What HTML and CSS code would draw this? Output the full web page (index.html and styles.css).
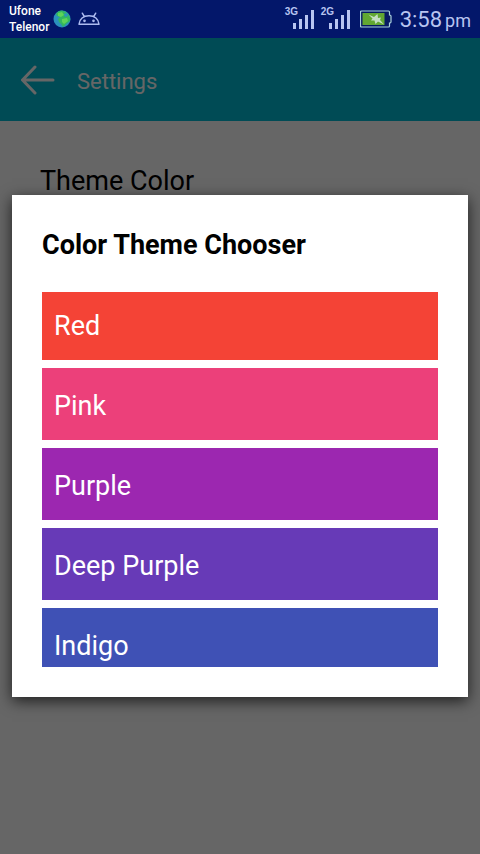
FILE: index.html
```html
<!DOCTYPE html>
<html lang="en">
<head>
<meta charset="utf-8">
<meta name="viewport" content="width=device-width, initial-scale=1">
<title>Settings</title>
<link rel="stylesheet" href="styles.css">
</head>
<body>
<div class="status">
  <div class="carriers"><span>Ufone</span><span>Telenor</span></div>
  <svg class="globe" width="18" height="18" viewBox="0 0 18 18" aria-hidden="true">
    <circle cx="9" cy="9" r="8.5" fill="#2b91bd"/>
    <path d="M3 4Q5 .8 9 .6L13 2 15 4Q18 8 17 11L13 14 10 17 8 14 6 12 5 9 7 7 4 6Z" fill="#32b661"/>
    <path d="M5 3 9 2 11 5 8 7 5 6ZM9 9 14 8 15 11 11 14 9 12Z" fill="#5dd458"/>
    <path d="M11 4 14 3 15 6 12 7Z" fill="#2b91bd"/>
  </svg>
  <svg class="droid" width="22" height="14" viewBox="0 0 22 14" fill="none" stroke="#aebcf0" stroke-width="1.500" aria-hidden="true">
    <path d="M1 12.300C1.300 7 5.500 3.700 11 3.700S20.700 7 21 12.300ZM6.300 4.700 4.300 1.200M15.700 4.700 17.700 1.200" stroke-linejoin="round" stroke-linecap="round"/>
    <circle cx="6.500" cy="8.800" r=".6"/><circle cx="15.500" cy="8.800" r=".6"/>
  </svg>
  <div class="tray">
    <div class="signal"><span>3G</span>
      <svg width="22" height="20" viewBox="0 0 22 20" fill="#b8c5f0" aria-hidden="true"><path d="M0 14h3v6H0zM6 10h3v10H6zM12 6h3v14h-3zM18 1h3v19h-3z"/></svg>
    </div>
    <div class="signal"><span>2G</span>
      <svg width="22" height="20" viewBox="0 0 22 20" fill="#b8c5f0" aria-hidden="true"><path d="M0 14h3v6H0zM6 10h3v10H6zM12 6h3v14h-3zM18 1h3v19h-3z"/></svg>
    </div>
    <svg class="battery" width="32" height="18" viewBox="0 0 32 18" aria-hidden="true">
      <path d="M1.500 1h27q1 0 1 1v3q1.500 0 1.500 1v6q0 1-1.500 1v3q0 1-1 1h-27q-1 0-1-1V2q0-1 1-1z" fill="#071a62" stroke="#a9d1dc" stroke-width="1.200"/>
      <path d="M2.500 3h22v12h-22z" fill="#62a831"/>
      <path d="M8.500 4.500 14 7 17.500 4 18 8 21 7.500 20 10 24 14.500 18 11.500 15.500 14 14.500 10.500 11 10.500 12.500 8.500Z" fill="#c4dfc2"/>
    </svg>
    <time><span>3:58</span><small>pm</small></time>
  </div>
</div>
<div class="screen">
  <header class="appbar">
    <button class="back" type="button" aria-label="Back">
      <svg width="34" height="30" viewBox="0 0 34 30" fill="none" stroke="#fff" stroke-width="3" stroke-linecap="round" stroke-linejoin="round" aria-hidden="true"><path d="M32 15H2M14 2 1.500 15 14 28"/></svg>
    </button>
    <h1>Settings</h1>
  </header>
  <main><p class="setting">Theme Color</p></main>
  <div class="backdrop">
    <section class="dialog" role="dialog" aria-modal="true" aria-labelledby="chooser">
      <h2 id="chooser">Color Theme Chooser</h2>
      <div class="viewport">
        <div class="swatches">
          <button class="swatch red" type="button">Red</button>
          <button class="swatch pink" type="button">Pink</button>
          <button class="swatch purple" type="button">Purple</button>
          <button class="swatch deep-purple" type="button">Deep Purple</button>
          <button class="swatch indigo" type="button">Indigo</button>
        </div>
      </div>
    </section>
  </div>
</div>
</body>
</html>
```
FILE: styles.css
```css
* { box-sizing: border-box; }
body {
  margin: 0;
  min-height: 100vh;
  display: flex;
  flex-direction: column;
  font-family: Roboto, "Liberation Sans", sans-serif;
  background: #fff;
}
h1, h2, p { margin: 0; font-weight: 400; }
button { border: 0; padding: 0; font: inherit; }
svg { display: block; }

.status {
  height: 38px;
  display: flex;
  align-items: center;
  padding: 0 9px;
  background: #03176a;
  color: #b8c5f0;
}
.carriers {
  display: flex;
  flex-direction: column;
  font: 500 12px/16px Roboto, sans-serif;
  color: #fff;
}
.globe { margin-left: 4px; }
.droid { margin-left: 7px; }
.tray { margin-left: auto; display: flex; align-items: center; }
.signal { display: flex; align-items: flex-start; margin-right: 6px; }
.signal span {
  width: 8px;
  font-family: "Liberation Sans", sans-serif;
  font-size: 10px;
  line-height: 6px;
  font-weight: 700;
}
.battery { margin: 0 8px 0 3px; }
time {
  display: flex;
  align-items: baseline;
  gap: 3px;
  padding-top: 2px;
  font-size: 22px;
  line-height: 24px;
}
time small { font-size: 18px; }

.screen {
  position: relative;
  flex: 1;
  display: flex;
  flex-direction: column;
}
.appbar {
  height: 83px;
  display: flex;
  align-items: center;
  gap: 22px;
  padding: 0 21px;
  background: #00bcd4;
  color: #fff;
}
.back { background: none; }
.appbar h1 { font-size: 22px; line-height: 28px; padding-top: 4px; }
.setting { padding: 44px 40px; font-size: 27px; line-height: 32px; color: #000; }

.backdrop {
  position: absolute;
  inset: 0;
  display: grid;
  align-items: center;
  padding: 0 12px;
  background: rgba(0, 0, 0, 0.6);
}
.dialog {
  padding: 30px;
  background: #fff;
  box-shadow: 0 4px 14px rgba(0, 0, 0, 0.7);
}
.dialog h2 {
  padding: 4px 0;
  margin-bottom: 27px;
  font-size: 27px;
  line-height: 32px;
  font-weight: 700;
  color: #000;
}
.viewport { max-height: 375px; overflow: hidden; }
.swatches { display: grid; gap: 8px; margin-top: -4px; }
.swatch {
  height: 72px;
  padding: 4px 12px 0;
  text-align: left;
  font-size: 27px;
  line-height: 32px;
  color: #fff;
}
.red { background: #f44336; }
.pink { background: #ec407a; }
.purple { background: #9c27b0; }
.deep-purple { background: #673ab7; }
.indigo { background: #3f51b5; }
```
